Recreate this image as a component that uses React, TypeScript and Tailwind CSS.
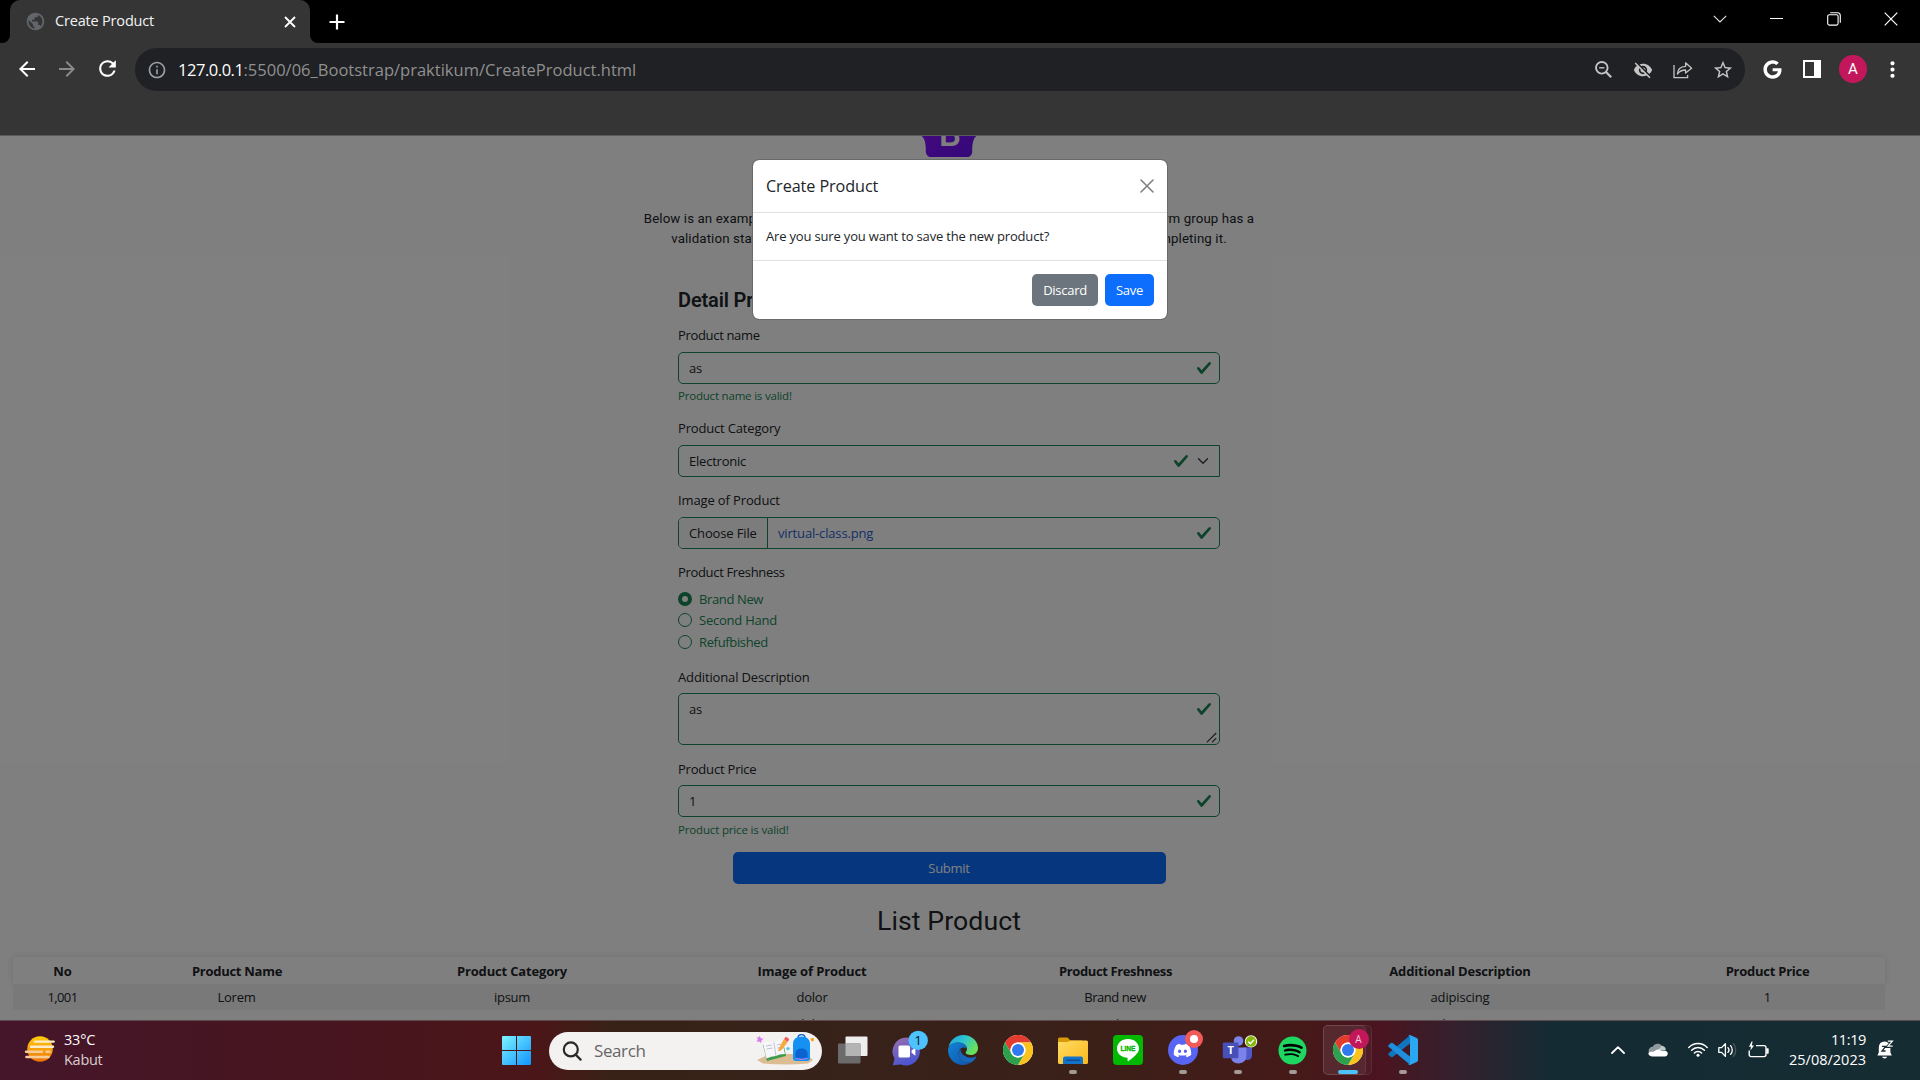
import type { ReactNode } from "react";
import {
  MdArrowBack,
  MdArrowForward,
  MdInfoOutline,
  MdMoreVert,
  MdPublic,
  MdRefresh,
  MdStarBorder,
  MdVisibilityOff,
} from "react-icons/md";
import { FaDiscord, FaGoogle, FaSpotify } from "react-icons/fa";

const GREEN = "#198754";

function Chrome({ size }: { size: number }) {
  return (
    <svg width={size} height={size} viewBox="0 0 48 48">
      <circle cx="24" cy="24" r="24" fill="#fff" />
      <path d="M3.2 12 A24 24 0 0 1 44.8 12 L24 12 A12 12 0 0 0 13.6 30 Z" fill="#e33b2e" />
      <path d="M44.8 12 A24 24 0 0 1 24 48 L34.4 30 A12 12 0 0 0 24 12 Z" fill="#fcc31e" />
      <path d="M24 48 A24 24 0 0 1 3.2 12 L13.6 30 A12 12 0 0 0 34.4 30 Z" fill="#2da04e" />
      <circle cx="24" cy="24" r="12" fill="#fff" />
      <circle cx="24" cy="24" r="9.6" fill="#3079ee" />
    </svg>
  );
}

function TabBar() {
  return (
    <div className="flex h-[43px] bg-black">
      <div className="flex w-[10px] items-end bg-[#353535]">
        <div className="h-full w-full rounded-br-[8px] bg-black" />
      </div>
      <div className="flex w-[300px] items-center rounded-t-[10px] bg-[#353535] pr-[13px] pl-[15px]">
        <MdPublic size={21} color="#62666b" />
        <span className="ml-[9px] grow pb-px text-[14.5px] tracking-[-0.18px] text-[#f1f3f4]">Create Product</span>
        <svg width="14" height="14" viewBox="0 0 14 14" stroke="#fff" strokeWidth="1.8">
          <path d="M2 2 L12 12 M12 2 L2 12" />
        </svg>
      </div>
      <div className="flex w-[10px] items-end bg-[#353535]">
        <div className="h-full w-full rounded-bl-[8px] bg-black" />
      </div>
      <div className="flex h-full items-center pl-[9px]">
        <svg width="16" height="16" viewBox="0 0 16 16" stroke="#fff" strokeWidth="2.2">
          <path d="M8 0.5 V15.5 M0.5 8 H15.5" />
        </svg>
      </div>
      <div className="ml-auto flex h-[37px] items-center">
        <div className="flex w-[57px] justify-center">
          <svg width="14" height="8" viewBox="0 0 14 8" fill="none" stroke="#e4e4e4" strokeWidth="1.1">
            <path d="M0.8 0.8 L7 7 L13.2 0.8" />
          </svg>
        </div>
        <div className="flex w-[57px] justify-center">
          <svg width="13" height="1" viewBox="0 0 13 1">
            <rect width="13" height="1" fill="#fff" />
          </svg>
        </div>
        <div className="flex w-[57px] justify-center">
          <svg width="14" height="14" viewBox="0 0 14 14" fill="none" stroke="#fff" strokeWidth="1.1">
            <rect x="0.7" y="2.7" width="10.4" height="10.4" rx="1.6" />
            <path d="M3.2 0.7 H10.4 A2.9 2.9 0 0 1 13.3 3.6 V10.8" />
          </svg>
        </div>
        <div className="flex w-[58px] justify-center">
          <svg width="14" height="14" viewBox="0 0 14 14" stroke="#fff" strokeWidth="1.2">
            <path d="M0.7 0.7 L13.3 13.3 M13.3 0.7 L0.7 13.3" />
          </svg>
        </div>
      </div>
    </div>
  );
}

function Toolbar() {
  return (
    <div className="h-[93px] border-b border-[#5a5a5a] bg-[#353535] pt-[5px]">
      <div className="flex h-[43px] items-center">
        <div className="flex w-[135px] items-center gap-[16px] pb-[2px] pl-[15px]">
          <MdArrowBack size={24} color="#fff" />
          <MdArrowForward size={24} color="#8a8a8a" />
          <MdRefresh size={25} color="#fff" />
        </div>
        <div className="flex h-[43px] w-[1610px] items-center rounded-full bg-[#202124] pr-[2px] pl-[12px]">
          <MdInfoOutline size={20} color="#9aa0a6" />
          <div className="ml-[11px] flex grow text-[16.5px] leading-[24px] text-[#909090]">
            <span className="tracking-[-0.46px] text-white">127.0.0.1</span>
            <span className="tracking-[0.01px]">:5500/06_Bootstrap/praktikum/CreateProduct.html</span>
          </div>
          <div className="flex items-center">
            <div className="flex w-[40px] justify-center">
              <svg width="17" height="17" viewBox="0 0 17 17" fill="none" stroke="#c4c4c4" strokeWidth="1.9">
                <circle cx="6.8" cy="6.8" r="5.8" />
                <path d="M11 11 L16.2 16.2" strokeWidth="2.2" />
                <path d="M4.2 6.8 H9.4" strokeWidth="1.4" />
              </svg>
            </div>
            <div className="flex w-[40px] justify-center">
              <MdVisibilityOff size={20} color="#c4c4c4" />
            </div>
            <div className="flex w-[40px] justify-center">
              <svg width="20" height="18" viewBox="0 0 20 18" fill="none" stroke="#c4c4c4" strokeWidth="1.3">
                <path d="M1 4 V16.6 H14.6 V14" />
                <path d="M4.4 13 C4.6 8.4 7.6 5.6 12.6 5.4 V1.8 L18.6 7.2 L12.6 12 V9 C9 9 6.4 10.2 4.4 13 Z" strokeLinejoin="round" />
              </svg>
            </div>
            <div className="flex w-[40px] justify-center">
              <MdStarBorder size={22} color="#c4c4c4" className="shrink-0" />
            </div>
          </div>
        </div>
        <div className="flex items-center pb-px pl-[7px]">
          <div className="flex w-[40px] justify-center">
            <FaGoogle size={19} color="#fff" />
          </div>
          <div className="flex w-[40px] justify-center">
            <div className="h-[18px] w-[18px] border-[2px] border-r-[7px] border-white" />
          </div>
          <div className="flex w-[42px] justify-center">
            <div className="flex h-[28px] w-[28px] items-center justify-center rounded-full bg-[#c2185b] font-[Roboto] text-[15px] text-white">
              A
            </div>
          </div>
          <div className="flex w-[36px] justify-center">
            <MdMoreVert size={25} color="#fff" />
          </div>
        </div>
      </div>
    </div>
  );
}

function Check() {
  return (
    <svg width="16" height="16" viewBox="0 0 8 8" className="shrink-0">
      <path
        fill={GREEN}
        d="M2.3 6.73.6 4.53c-.4-1.04.46-1.4 1.1-.8l1.1 1.4 3.4-3.8c.6-.63 1.6-.27 1.2.7l-4 4.6c-.43.5-.8.4-1.1.1z"
      />
    </svg>
  );
}

function Label({ children, className }: { children: ReactNode; className: string }) {
  return <div className={`h-[20px] leading-[20px] whitespace-nowrap ${className}`}>{children}</div>;
}

function Radio({ checked, children, className }: { checked?: boolean; children: ReactNode; className: string }) {
  return (
    <div className="flex h-[21.6px] items-center text-[#198754]">
      {checked ? (
        <div className="h-[14px] w-[14px] rounded-full border-[4px] border-[#198754] bg-white" />
      ) : (
        <div className="h-[14px] w-[14px] rounded-full border border-[#198754]" />
      )}
      <span className={`ml-[7px] pt-px ${className}`}>{children}</span>
    </div>
  );
}

function ProductForm() {
  return (
    <div className="mx-auto w-[542px] text-[13px] text-[#212529]">
      <div className="mt-[40px] h-[24px] font-[Roboto] text-[20px] leading-[25px] font-semibold tracking-[-0.15px]">
        Detail Product
      </div>

      <Label className="mt-[13px] tracking-[-0.33px]">Product name</Label>
      <div className="mt-[7px] flex h-[32px] items-center justify-between rounded-[5px] border border-[#198754] pr-[7px] pl-[10px]">
        <span className="pt-px tracking-[-0.3px]">as</span>
        <Check />
      </div>
      <div className="mt-[3px] h-[18px] text-[11.5px] leading-[18px] tracking-[-0.2px] text-[#198754]">
        Product name is valid!
      </div>

      <Label className="mt-[13px] tracking-[-0.17px]">Product Category</Label>
      <div className="mt-[7px] flex h-[32px] items-center rounded-l-[5px] border border-[#198754] pr-[10px] pl-[10px]">
        <span className="grow pt-px tracking-[-0.22px]">Electronic</span>
        <Check />
        <svg width="12" height="12" viewBox="0 0 16 16" className="ml-[8px]" fill="none" stroke="#343a40" strokeWidth="1.8" strokeLinecap="round" strokeLinejoin="round">
          <path d="m2 5 6 6 6-6" />
        </svg>
      </div>

      <Label className="mt-[13px] tracking-[-0.13px]">Image of Product</Label>
      <div className="mt-[7px] flex h-[32px] items-center overflow-hidden rounded-[5px] border border-[#198754] pr-[7px]">
        <span className="flex h-full w-[89px] items-center border-r border-[#198754] bg-[#f8f9fa] pt-px pl-[10px] tracking-[-0.14px]">
          Choose File
        </span>
        <span className="ml-[10px] grow pt-px tracking-[-0.16px] text-[#2a5fcc]">virtual-class.png</span>
        <Check />
      </div>

      <Label className="mt-[13px] tracking-[-0.33px]">Product Freshness</Label>
      <div className="mt-[6px] mb-[14px]">
        <Radio checked className="tracking-[-0.37px]">Brand New</Radio>
        <Radio className="tracking-[-0.23px]">Second Hand</Radio>
        <Radio className="tracking-[-0.35px]">Refufbished</Radio>
      </div>

      <Label className="tracking-[-0.13px]">Additional Description</Label>
      <div className="mt-[6px] flex h-[52px] justify-between rounded-[5px] border border-[#198754] pr-[2px] pl-[10px]">
        <span className="mt-[5px] leading-[20px] tracking-[-0.3px]">as</span>
        <div className="flex flex-col items-end justify-between pt-[7px] pb-[1px]">
          <span className="flex pr-[5px]">
            <Check />
          </span>
          <svg width="11" height="11" viewBox="0 0 11 11" stroke="#3c3c3c" strokeWidth="1.2">
            <path d="M0.8 10.4 L10.2 1 M6 10.4 L10.2 6.2" />
          </svg>
        </div>
      </div>

      <Label className="mt-[14px] tracking-[-0.2px]">Product Price</Label>
      <div className="mt-[6px] flex h-[32px] items-center justify-between rounded-[5px] border border-[#198754] pr-[7px] pl-[10px]">
        <span className="pt-px">1</span>
        <Check />
      </div>
      <div className="mt-[4px] h-[18px] text-[11.5px] leading-[18px] tracking-[-0.16px] text-[#198754]">
        Product price is valid!
      </div>

      <div className="mx-auto mt-[13px] flex h-[32px] w-[433px] items-center justify-center rounded-[5px] bg-[#0d6efd] pt-px tracking-[-0.27px] text-white">
        Submit
      </div>
    </div>
  );
}

const cols = "grid grid-cols-[100px_248px_302px_298px_309px_380px_235px] text-center";

function ListRow({ className }: { className: string }) {
  return (
    <div className={`${cols} h-[26px] ${className}`}>
      <span className="pr-px tracking-[-0.6px]">1,001</span>
      <span className="pr-px tracking-[-0.25px]">Lorem</span>
      <span className="tracking-[-0.25px]">ipsum</span>
      <span className="tracking-[-0.25px]">dolor</span>
      <span className="pr-px tracking-[-0.44px]">Brand new</span>
      <span className="tracking-[-0.14px]">adipiscing</span>
      <span>1</span>
    </div>
  );
}

function Modal() {
  return (
    <div className="absolute inset-0 bg-black/50">
      <div className="mx-auto mt-[23px] h-[161px] w-[416px] rounded-[7px] border border-[#6a6a6a] bg-white bg-clip-padding text-[13px] text-[#212529]">
        <div className="flex h-[53px] items-center justify-between border-b border-[#dee2e6] px-[13px]">
          <span className="pt-px text-[16.2px] font-medium tracking-[-0.08px]">Create Product</span>
          <svg width="14" height="14" viewBox="0 0 14 14" stroke="#808080" strokeWidth="1.6" strokeLinecap="round" className="-mt-px">
            <path d="M1 1 L13 13 M13 1 L1 13" />
          </svg>
        </div>
        <div className="flex h-[48px] items-center border-b border-[#dee2e6] px-[13px] tracking-[-0.17px]">
          Are you sure you want to save the new product?
        </div>
        <div className="flex h-[58px] items-center justify-end gap-[7px] px-[13px] text-white">
          <div className="flex h-[32px] w-[66px] items-center justify-center rounded-[5px] bg-[#6c757d] pt-px tracking-[-0.27px]">
            Discard
          </div>
          <div className="flex h-[32px] w-[49px] items-center justify-center rounded-[5px] bg-[#0d6efd] pt-px tracking-[-0.3px]">
            Save
          </div>
        </div>
      </div>
    </div>
  );
}

function BootstrapLogo() {
  return (
    <svg width="60" height="47.5" viewBox="0 0 118 94" className="shrink-0">
      <defs>
        <linearGradient id="bs" x1="0" y1="0" x2="1" y2="1">
          <stop offset="0" stopColor="#9013fe" />
          <stop offset="1" stopColor="#6610f2" />
        </linearGradient>
      </defs>
      <path
        fill="url(#bs)"
        d="M24.509 0c-6.733 0-11.715 5.893-11.492 12.284.214 6.14-.064 14.092-2.066 20.577C8.943 39.365 5.547 43.485 0 44.014v5.972c5.547.529 8.943 4.649 10.951 11.153 2.002 6.485 2.28 14.437 2.066 20.577C12.794 88.106 17.776 94 24.51 94H93.5c6.733 0 11.714-5.893 11.491-12.284-.214-6.14.064-14.092 2.066-20.577 2.009-6.504 5.396-10.624 10.943-11.153v-5.972c-5.547-.529-8.934-4.649-10.943-11.153-2.002-6.484-2.28-14.437-2.066-20.577C105.214 5.894 100.233 0 93.5 0H24.508z"
      />
      <text x="61" y="72" textAnchor="middle" fontFamily="Roboto" fontWeight="500" fontSize="70" fill="#fff">
        B
      </text>
    </svg>
  );
}

function Page() {
  return (
    <div className="relative h-[884px] overflow-hidden bg-white">
      <div className="w-[1898px]">
        <div className="flex h-[21px] items-end justify-center overflow-hidden">
          <BootstrapLogo />
        </div>
        <div className="mt-[52px] h-[39px] text-center font-[Roboto] text-[13.3px] leading-[20px] whitespace-nowrap text-[#212529]">
          <div className="tracking-[0.09px]">
            Below is an example form built entirely with Bootstrap's form controls. Each required form group has a
          </div>
          <div className="tracking-[0.11px]">
            validation state that can be triggered by attempting to submit the form without completing it.
          </div>
        </div>
        <ProductForm />
        <div className="mt-[22px] h-[31px] text-center font-[Roboto] text-[26.67px] leading-[31px] tracking-[0.08px] text-[#212529]">
          List Product
        </div>
        <div className="mt-[20px] ml-[13px] w-[1872px] text-[13px] text-[#212529]">
          <div className={`${cols} h-[27px] leading-[28px] font-bold shadow-[0_0_8px_rgba(0,0,0,0.12)]`}>
            <span className="pr-px">No</span>
            <span className="tracking-[-0.27px]">Product Name</span>
            <span className="tracking-[-0.17px]">Product Category</span>
            <span className="tracking-[-0.12px]">Image of Product</span>
            <span className="tracking-[-0.38px]">Product Freshness</span>
            <span className="tracking-[-0.19px]">Additional Description</span>
            <span className="tracking-[-0.25px]">Product Price</span>
          </div>
          <ListRow className="bg-[#f2f2f2] leading-[26px]" />
          <ListRow className="leading-[28px]" />
        </div>
      </div>
      <Modal />
    </div>
  );
}

function TaskItem({ children, mark }: { children: ReactNode; mark?: boolean }) {
  return (
    <div className="relative flex h-[60px] w-[55px] items-center justify-center pb-px">
      {children}
      {mark && <div className="absolute bottom-[7px] h-[4px] w-[8px] rounded-full bg-[#a39a96]" />}
    </div>
  );
}

function WeatherIcon() {
  return (
    <svg width="32" height="28" viewBox="0 0 32 28" className="-mt-[3px]">
      <defs>
        <linearGradient id="sun" x1="0" y1="0" x2="0" y2="1">
          <stop offset="0" stopColor="#ffce0a" />
          <stop offset="1" stopColor="#f0720c" />
        </linearGradient>
      </defs>
      <circle cx="16" cy="14" r="12.8" fill="url(#sun)" />
      <g stroke="#fdeccc" strokeWidth="2.4" strokeLinecap="round">
        <path d="M11 6.6 H29.6" />
        <path d="M7 11.8 H29" />
        <path d="M2 16.8 H18 M22.6 16.8 H25.6" stroke="#f7cd97" />
        <path d="M2.4 22 H24.6" stroke="#f7cd97" />
      </g>
    </svg>
  );
}

function SearchArt() {
  return (
    <svg width="60" height="34" viewBox="0 0 60 34">
      <path d="M1 26 L14 20 H50 L57 26 L52 29.6 Q30 31.4 7 29.6 Z" fill="#dcbc92" />
      <path d="M7 11 L17 9 L27 8 L30 22 L11 27 Z" fill="#3f9a4c" />
      <path d="M7 9.5 Q13 6 18 9 Q22 6 26 7 L29 20 Q23 20 20 22 Q15 22 10.5 24.5 Z" fill="#f6f6fb" />
      <path d="M18 9 L20 22 M10 12 L16 11 M10.6 15 L16.6 14 M21 11 L25.4 10 M21.4 14 L26 13" stroke="#b4b4c8" strokeWidth="0.8" />
      <path d="M22.6 15 L28 5 L31.6 8 L25.6 16 L22.2 17.6 Z" fill="#f9a93b" />
      <path d="M28 5 L29.4 3.2 Q31.6 2.6 33.2 5.6 L31.6 8 Z" fill="#ef5b5b" />
      <path d="M3.6 1.6 L4.8 4.2 L7.6 4.8 L5.4 6.6 L5.2 9 L3.2 7.4 L0.6 7.8 L1.8 5.4 L0.8 3 L3 3.4 Z" fill="#d97bf0" />
      <circle cx="32" cy="14.6" r="1.7" fill="#56c8f0" />
      <path d="M42 4 Q42 0.6 45.5 0.6 Q49 0.6 49 4" fill="none" stroke="#1565c8" strokeWidth="1.4" />
      <path d="M37 10 Q37 2.4 45.5 2.4 Q54 2.4 54 10 V24 Q54 27 51 27 H40 Q37 27 37 24 Z" fill="#1491f2" />
      <path d="M39.4 19 Q40 14.4 45.5 14.4 Q51 14.4 51.6 19 V23 Q51.6 24.6 50 24.6 H41 Q39.4 24.6 39.4 23 Z" fill="#0b63cf" />
      <path d="M39.6 24.2 Q45.5 26.4 51.4 24.2" stroke="#b87cf5" strokeWidth="1.2" fill="none" />
      <circle cx="56.4" cy="5.6" r="1.8" fill="#f7a51b" />
    </svg>
  );
}

function Taskbar() {
  return (
    <div className="flex h-[60px] items-center border-t border-[#5d4a4c] bg-[linear-gradient(90deg,#45162a_0px,#47151f_330px,#4b1618_540px,#382217_610px,#37221a_820px,#3a2018_1080px,#451a18_1290px,#4a1420_1380px,#35202c_1450px,#152b33_1550px,#162c33_1920px)]">
      <div className="flex w-[502px] items-center pl-[24px]">
        <WeatherIcon />
        <div className="-mt-[2px] ml-[8px] text-[14.5px] leading-[20px]">
          <div className="tracking-[-0.2px] text-white">33°C</div>
          <div className="tracking-[-0.28px] text-[#d9cdd0]">Kabut</div>
        </div>
      </div>
      <svg width="29" height="29" viewBox="0 0 29 29">
        <defs>
          <linearGradient id="win" x1="0" y1="0" x2="1" y2="1">
            <stop offset="0" stopColor="#7df3ff" />
            <stop offset="1" stopColor="#0f94ff" />
          </linearGradient>
        </defs>
        <path
          fill="url(#win)"
          d="M1 0 H14 V14 H0 V1 Q0 0 1 0 Z M15 0 H28 Q29 0 29 1 V14 H15 Z M0 15 H14 V29 H1 Q0 29 0 28 Z M15 15 H29 V28 Q29 29 28 29 H15 Z"
        />
      </svg>
      <div className="ml-[18px] flex h-[38px] w-[273px] items-center rounded-full bg-[#f4f2f1] pr-[6px] pl-[13px]">
        <svg width="20" height="20" viewBox="0 0 20 20" fill="none" stroke="#2a2a2a" strokeWidth="2.2">
          <circle cx="8.8" cy="8.4" r="7" />
          <path d="M13.6 13.6 L18.6 18.6" strokeLinecap="round" />
        </svg>
        <span className="ml-[12px] grow text-[17px] tracking-[-0.4px] text-[#666]">Search</span>
        <SearchArt />
      </div>
      <div className="ml-[3px] flex">
        <TaskItem>
          <svg width="30" height="28" viewBox="0 0 30 28">
            <rect x="7.5" y="0.5" width="22" height="19.5" rx="1" fill="#eeeeee" />
            <rect x="0" y="7.5" width="22.5" height="20" rx="1" fill="#6b6b6b" />
            <rect x="7.5" y="7.5" width="15" height="12.5" fill="#b4b4b4" />
          </svg>
        </TaskItem>
        <TaskItem>
          <svg width="36" height="36" viewBox="0 0 36 36" className="mb-[5px] ml-[5px]">
            <defs>
              <linearGradient id="chat" x1="0" y1="0" x2="0.4" y2="1">
                <stop offset="0" stopColor="#9a6fae" />
                <stop offset="1" stopColor="#4c55cf" />
              </linearGradient>
            </defs>
            <path d="M14.5 7.5 A14 14 0 1 1 9 34.6 L0.8 35.2 L2.6 28.8 A14 14 0 0 1 14.5 7.5 Z" fill="url(#chat)" />
            <rect x="6.5" y="15.5" width="11.5" height="12" rx="1.6" fill="#fff" />
            <path d="M19.6 20.4 L23.4 17.4 V25.8 L19.6 22.8 Z" fill="#fff" />
            <circle cx="26.2" cy="10.4" r="9.7" fill="#4cc2ff" />
            <text x="26.2" y="15.2" textAnchor="middle" fontFamily="Open Sans" fontSize="13.5" fill="#101010">
              1
            </text>
          </svg>
        </TaskItem>
        <TaskItem>
          <svg width="30" height="30" viewBox="0 0 30 30">
            <defs>
              <linearGradient id="edgeTop" x1="0" y1="0" x2="1" y2="0.5">
                <stop offset="0" stopColor="#1f9fe0" />
                <stop offset="0.5" stopColor="#2cc3d2" />
                <stop offset="1" stopColor="#6be05a" />
              </linearGradient>
              <linearGradient id="edgeLow" x1="0" y1="0" x2="1" y2="1">
                <stop offset="0" stopColor="#1283d6" />
                <stop offset="1" stopColor="#0f53a8" />
              </linearGradient>
            </defs>
            <path d="M0.6 12 C2 5 8 0 15 0 C24 0 30 6.5 30 13 C30 17.5 26.5 20 23 20 C19.6 20 17.6 18.8 17.6 17.6 C17.6 16.8 19 16.2 19 13.8 C19 10.4 15.4 7.4 10.6 7.4 C6.4 7.4 2.6 9 0.6 12 Z" fill="url(#edgeTop)" />
            <path d="M0 15 C0 10.4 5 7.4 10.6 7.4 C15.4 7.4 19 10.4 19 13.6 C15.6 10.8 10.6 13 10.6 18.4 C10.6 24.4 17 28.6 22.4 27.8 C20 29.4 17.6 30 15 30 C6.6 30 0 23.6 0 15 Z" fill="url(#edgeLow)" />
            <path d="M12.2 14 C8.4 19.6 12 28.6 22.4 27.8 C25 26.6 27 24.6 28 22.4 C28.4 21.6 27.8 21.4 27.2 21.8 C22.4 24.2 13.6 22 12.2 14 Z" fill="#1767bd" />
          </svg>
        </TaskItem>
        <TaskItem>
          <Chrome size={30} />
        </TaskItem>
        <TaskItem mark>
          <svg width="30" height="27" viewBox="0 0 30 27">
            <defs>
              <linearGradient id="fold" x1="0" y1="0" x2="1" y2="1">
                <stop offset="0" stopColor="#ffdc62" />
                <stop offset="1" stopColor="#fbb81c" />
              </linearGradient>
            </defs>
            <path d="M0 2 Q0 0.5 1.5 0.5 H9.5 L12.5 3.5 H24 V10 H0 Z" fill="#d99a08" />
            <path d="M0 5 H10 L12.5 3.5 H28.5 Q30 3.5 30 5 V25.5 Q30 27 28.5 27 H1.5 Q0 27 0 25.5 Z" fill="url(#fold)" />
            <path d="M5 27 V21.5 Q5 19.5 7 19.5 H23 Q25 19.5 25 21.5 V27 Z" fill="#1273c8" />
            <rect x="8" y="22.6" width="14" height="1.4" rx="0.7" fill="#0b4e96" />
          </svg>
        </TaskItem>
        <TaskItem>
          <svg width="30" height="30" viewBox="0 0 30 30">
            <rect width="30" height="30" rx="4" fill="#00b900" />
            <path d="M15 4 C21.4 4 26 8.2 26 13.4 C26 18.6 19.6 22.6 15.6 26 C14.6 26.6 14.4 25.8 14.6 22.8 C8.4 22.4 4 18.6 4 13.4 C4 8.2 8.6 4 15 4 Z" fill="#fff" />
            <text x="15" y="16.4" textAnchor="middle" fontFamily="Liberation Sans" fontWeight="700" fontSize="6.6" stroke="#00b900" strokeWidth="0.3" fill="#00b900">
              LINE
            </text>
          </svg>
        </TaskItem>
        <TaskItem mark>
          <div className="relative flex h-[30px] w-[30px] items-center justify-center rounded-full bg-[#5865f2]">
            <FaDiscord size={19} color="#fff" />
            <div className="absolute -top-[5px] left-[17px] flex h-[18px] w-[18px] items-center justify-center rounded-full bg-[#f25a5a]">
              <div className="h-[8px] w-[8px] rounded-full bg-white" />
            </div>
          </div>
        </TaskItem>
        <TaskItem mark>
          <svg width="36" height="30" viewBox="0 0 36 30" className="ml-[5px]">
            <circle cx="16.5" cy="6" r="4.8" fill="#7b83eb" />
            <path d="M22 12.4 H30 V20 Q30 25 25 25 H22 Z" fill="#5059c9" />
            <path d="M9 12.4 H24.4 V20 Q24.4 28.4 16.6 28.4 Q9.6 28.4 9 22 Z" fill="#7b83eb" />
            <rect x="0.8" y="7.5" width="15.6" height="15.8" rx="1.2" fill="#4650b8" />
            <text x="8.6" y="19.4" textAnchor="middle" fontFamily="Open Sans" fontWeight="700" fontSize="11" fill="#fff">
              T
            </text>
            <circle cx="29" cy="6.4" r="6.2" fill="#fff" />
            <circle cx="29" cy="6.4" r="5.3" fill="#84b80c" />
            <path d="M26.2 6.6 L28.3 8.7 L32 4.8" stroke="#fff" strokeWidth="1.4" fill="none" />
          </svg>
        </TaskItem>
        <TaskItem mark>
          <div className="flex h-[27px] w-[27px] items-center justify-center rounded-full bg-black">
            <FaSpotify size={29} color="#1ed760" className="shrink-0" />
          </div>
        </TaskItem>
        <TaskItem>
          <div className="absolute top-[4px] left-[3px] h-[50px] w-[49px] rounded-[5px] border border-white/8 bg-white/3" />
          <div className="absolute top-[4px] left-[3px] h-[50px] w-[43px] rounded-[5px] border border-white/8 bg-white/5" />
          <div className="relative">
            <Chrome size={30} />
            <div className="absolute -top-[6px] left-[16px] flex h-[20px] w-[20px] items-center justify-center rounded-full bg-[#c2185b] text-[10px] text-[#f3c9d9]">
              A
            </div>
          </div>
          <div className="absolute bottom-[7px] h-[4px] w-[20px] rounded-full bg-[#4cc2ff]" />
        </TaskItem>
        <TaskItem mark>
          <svg width="30" height="30" viewBox="0 0 30 30">
            <path d="M22 0.3 L22 8.4 L4.6 22 Q3.8 22.6 3 22 L0.6 19.9 Q-0.2 19 0.6 18.2 Z" fill="#0f76bd" />
            <path d="M22 29.7 L22 21.6 L4.6 8 Q3.8 7.4 3 8 L0.6 10.1 Q-0.2 11 0.6 11.8 Z" fill="#1e8fdc" />
            <path d="M22 0 L28.8 3 Q30 3.6 30 4.8 V25.2 Q30 26.4 28.8 27 L22 30 Q20.6 30 20.4 29.4 Q22 29 22 27.4 V2.6 Q22 1 20.4 0.6 Q20.8 0 22 0 Z" fill="#2ba6f0" />
          </svg>
        </TaskItem>
      </div>
      <div className="ml-auto flex items-center pb-[2px]">
        <svg width="14" height="8" viewBox="0 0 14 8" fill="none" stroke="#fff" strokeWidth="1.8" strokeLinecap="round" strokeLinejoin="round">
          <path d="M1 7 L7 1.2 L13 7" />
        </svg>
        <svg width="20" height="14" viewBox="0 0 20 14" className="ml-[23px]">
          <path d="M1 9.6 C-0.4 6.6 2 3.6 4.8 3.8 C6 0.4 11.4 -0.6 14 2.8 L17 6 L8 12 Z" fill="#8e999d" />
          <path d="M14 2.8 C17 3.6 18 5 17.6 7 L10 7 Z" fill="#c3cacc" />
          <path d="M4 13.4 C1.6 13.4 0.2 11.8 0.4 10 C1 8.6 4 9 6 8.6 C8.4 6.4 11 5.8 13.4 8 C17 6.4 20 8.4 19.8 10.8 C19.4 12.6 18.4 13.4 17 13.4 Z" fill="#fff" />
        </svg>
        <svg width="20" height="15" viewBox="0 0 20 15" className="ml-[20px]" fill="none" stroke="#fff" strokeWidth="1.5" strokeLinecap="round">
          <path d="M0.8 5.4 A12.6 12.6 0 0 1 19.2 5.4" />
          <path d="M3.6 8.2 A8.8 8.8 0 0 1 16.4 8.2" />
          <path d="M6.4 11 A4.9 4.9 0 0 1 13.6 11" />
          <circle cx="10" cy="13.2" r="1.5" fill="#fff" stroke="none" />
        </svg>
        <svg width="20" height="16" viewBox="0 0 20 16" className="ml-[10px]" fill="none" stroke="#fff" strokeWidth="1.3" strokeLinecap="round" strokeLinejoin="round">
          <path d="M0.8 5.6 H3.6 L7.4 1.6 V14.4 L3.6 10.4 H0.8 Z" />
          <path d="M10 5.6 A3.6 3.6 0 0 1 10 10.4" />
          <path d="M12.6 3.6 A6.6 6.6 0 0 1 12.6 12.4" />
          <path d="M15.4 1.6 A10 10 0 0 1 15.4 14.4" stroke="#48585e" />
        </svg>
        <svg width="21" height="17" viewBox="0 0 21 17" className="ml-[10px]" fill="none" stroke="#fff" strokeWidth="1.4" strokeLinejoin="round">
          <path d="M8 4.6 H16 Q18 4.6 18 6.6 V13.6 Q18 15.6 16 15.6 H3.2 Q1.2 15.6 1.2 13.6 V9.6" />
          <path d="M18.4 8 H20 V12 H18.4" fill="#fff" />
          <path d="M3.6 0.6 L1 5.8 H3 L2.4 9.4 L6 4.4 H3.8 L4.6 0.6 Z" fill="#fff" stroke="none" />
        </svg>
        <div className="ml-[19px] w-[78px] text-right text-[14.5px] leading-[20px] text-white">
          <div className="tracking-[-0.38px]">11:19</div>
          <div>25/08/2023</div>
        </div>
        <svg width="18" height="20" viewBox="0 0 18 20" className="mr-[26px] ml-[10px]">
          <path d="M1.4 15.4 L2.8 12.6 V7.6 Q3 1.6 8.6 1.6 Q14.4 1.6 14.4 7.6 V12.6 L15.8 15.4 Z" fill="#fff" />
          <path d="M6 16.8 A2.8 2.8 0 0 0 11.2 16.8 Z" fill="#fff" />
          <path d="M6 6.4 H9.6 L6 11 H9.6" fill="none" stroke="#162c33" strokeWidth="1.3" />
          <path d="M11.2 1 H16.6 L11.8 6.6 H16.6" fill="none" stroke="#162c33" strokeWidth="3" />
          <path d="M11.8 1.2 H16.4 L12 6.2 H16.6" fill="none" stroke="#fff" strokeWidth="1.2" />
        </svg>
      </div>
    </div>
  );
}

export default function App() {
  return (
    <div className="h-[1080px] w-[1920px] overflow-hidden bg-black font-['Open_Sans','Noto_Sans',sans-serif]">
      <TabBar />
      <Toolbar />
      <Page />
      <Taskbar />
    </div>
  );
}
